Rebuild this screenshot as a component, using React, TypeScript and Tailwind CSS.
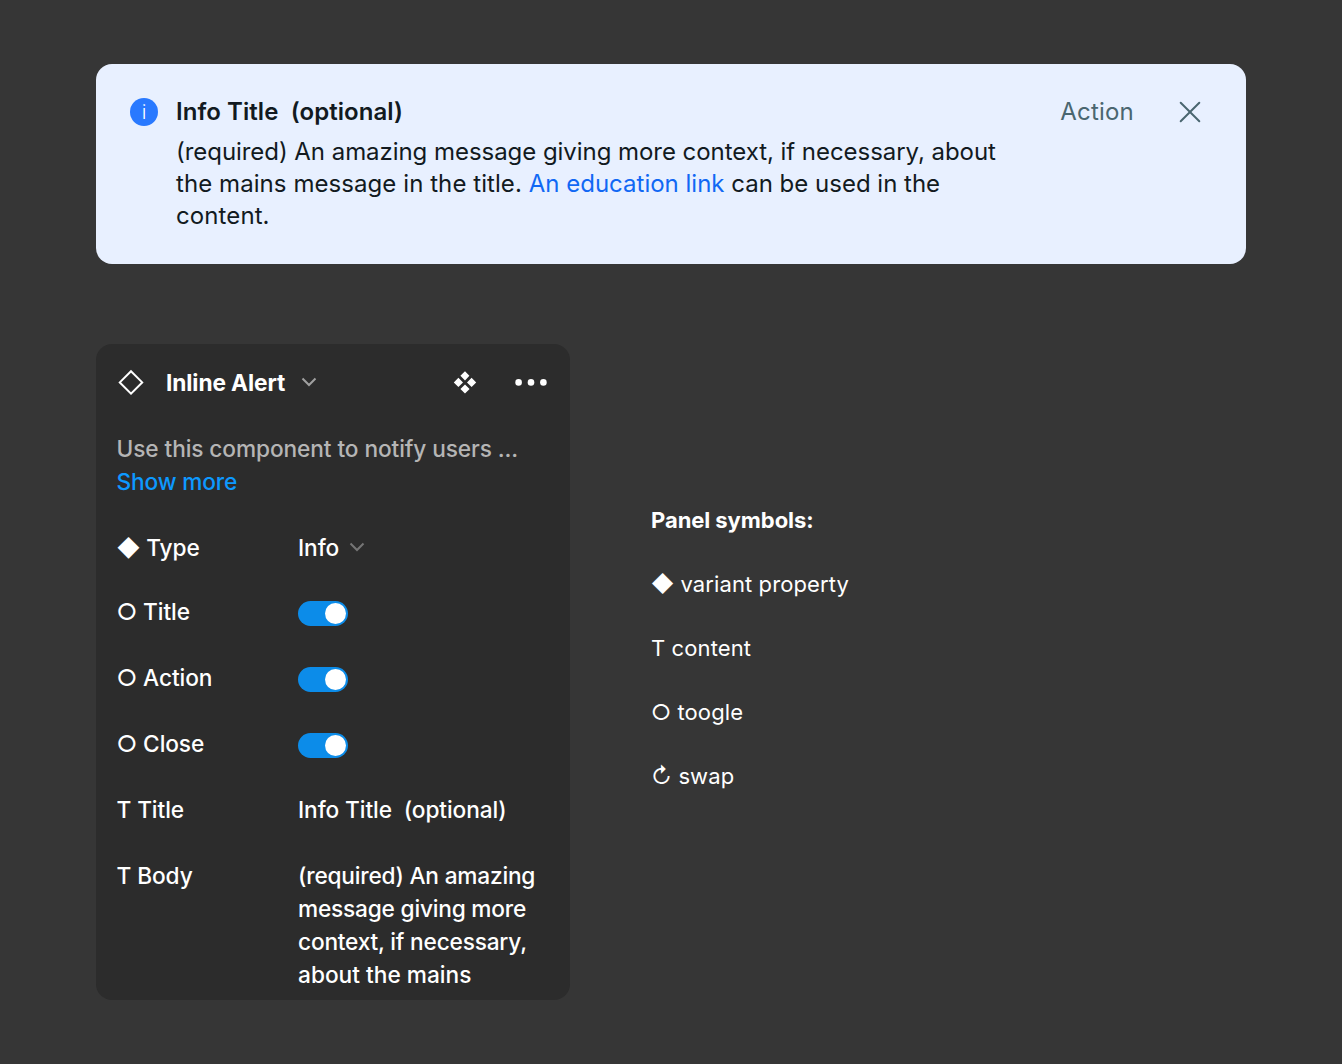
import type { ReactNode } from 'react';

function CloseIcon() {
  return (
    <svg width="22" height="22" viewBox="0 0 22 22" fill="none" stroke="#4a6670" strokeWidth="2" strokeLinecap="round">
      <path d="M1.7 1.7 20.3 20.3M20.3 1.7 1.7 20.3" />
    </svg>
  );
}

function Chevron({ className }: { className: string }) {
  return (
    <svg className={className} width="16" height="10" viewBox="0 0 16 10" fill="none" stroke="currentColor" strokeWidth="2">
      <path d="M1.5 1.5 8 8l6.5-6.5" />
    </svg>
  );
}

function InstanceIcon() {
  return (
    <svg width="26" height="26" viewBox="0 0 26 26" fill="none" stroke="#fff" strokeWidth="2">
      <path d="M13 2.2 24.2 13.4 13 24.6 1.8 13.4Z" />
    </svg>
  );
}

function ComponentIcon() {
  return (
    <svg width="24" height="24" viewBox="0 0 24 24" fill="#fff">
      <path d="M12 1.2 16.4 5.8 12 10.4 7.4 5.8ZM12 14.4l4.6 4.6L12 23.6l-4.6-4.6ZM5.4 7.8 10 12.4l-4.6 4.6L.8 12.4ZM18.6 7.8 23.2 12.4l-4.6 4.6L14 12.4Z" />
    </svg>
  );
}

function MoreIcon() {
  return (
    <svg width="32" height="8" viewBox="0 0 32 8" fill="#fff">
      <circle cx="3.6" cy="4.4" r="3.3" />
      <circle cx="16" cy="4.4" r="3.3" />
      <circle cx="28.4" cy="4.4" r="3.3" />
    </svg>
  );
}

function Toggle() {
  return (
    <div className="-mb-0.5 flex h-[31px] w-[50px] items-end pt-1.5">
      <div className="flex h-[25px] w-full items-center justify-end rounded-full bg-[#0c8ce9] pr-0.5">
        <div className="size-[21px] rounded-full bg-white" />
      </div>
    </div>
  );
}

function Row({ label, children }: { label: string; children: ReactNode }) {
  return (
    <div className="flex items-start">
      <div className="w-[181.5px] shrink-0">{label}</div>
      <div className="flex-1">{children}</div>
    </div>
  );
}

export default function App() {
  return (
    <div className="flex min-h-screen flex-col gap-20 bg-[#363636] px-24 py-16 font-['Inter',sans-serif] text-white">
      <div className="flex h-[200px] items-start rounded-2xl bg-[#e8f0ff] pt-8 pr-[45px] pl-[34px] text-2xl leading-8 text-[#121a21]">
        <div className="mt-0.5 flex size-7 shrink-0 items-center justify-center rounded-full bg-[#2979ff] text-xl leading-7 font-light text-white">
          i
        </div>
        <div className="ml-[18px] flex-1">
          <div className="font-semibold tracking-[0.06px] whitespace-pre">{'Info Title  (optional)'}</div>
          <div className="mt-2">
            <p className="tracking-[-0.05px]">
              (required) An amazing message giving more context, if necessary, about
            </p>
            <p>
              <span className="tracking-[0.07px]">the mains message in the title. </span>
              <a className="text-[#1168f4]">An education link</a> can be used in the
            </p>
            <p className="tracking-[0.1px]">content.</p>
          </div>
        </div>
        <div className="tracking-[0.2px] text-[#4a6670]">Action</div>
        <div className="mt-[5px] ml-[45px]">
          <CloseIcon />
        </div>
      </div>

      <div className="flex gap-[81px]">
        <div className="h-[656px] w-[474px] rounded-2xl bg-[#2c2c2c] pt-[21.5px] pl-[20.5px] text-[22.7px] leading-[33px] font-[450] tracking-[-0.1px]">
          <div className="flex items-center pr-[23px]">
            <div className="ml-[1.5px]">
              <InstanceIcon />
            </div>
            <span className="ml-[22px] font-bold tracking-[-0.1px]">Inline Alert</span>
            <Chevron className="ml-[15.5px] text-[#a0a0a0]" />
            <div className="ml-auto flex items-center gap-[38px]">
              <ComponentIcon />
              <MoreIcon />
            </div>
          </div>
          <div className="mt-[33px] text-[#b5b5b5]">Use this component to notify users ...</div>
          <div className="tracking-[-0.15px] text-[#0d99ff]">Show more</div>
          <div className="mt-[33px] flex flex-col gap-[33px]">
            <div className="-mb-0.5">
              <Row label="◆ Type">
                <div className="flex items-center">
                  Info <Chevron className="ml-2.5 text-[#757575]" />
                </div>
              </Row>
            </div>
            <Row label="○ Title"><Toggle /></Row>
            <Row label="○ Action"><Toggle /></Row>
            <Row label="○ Close"><Toggle /></Row>
            <Row label="T Title"><span className="whitespace-pre">{'Info Title  (optional)'}</span></Row>
            <Row label="T Body">
              <div className="tracking-[-0.21px]">
                (required) An amazing
                <br />
                message giving more
                <br />
                context, if necessary,
              </div>
              <div className="tracking-normal">about the mains</div>
            </Row>
          </div>
        </div>

        <div className="flex flex-col gap-8 pt-40 text-[22px] leading-8 tracking-[0.1px]">
          <div className="font-bold tracking-[-0.06px]">Panel symbols:</div>
          <div>◆ variant property</div>
          <div>T content</div>
          <div>○ toogle</div>
          <div>↻ swap</div>
        </div>
      </div>
    </div>
  );
}
